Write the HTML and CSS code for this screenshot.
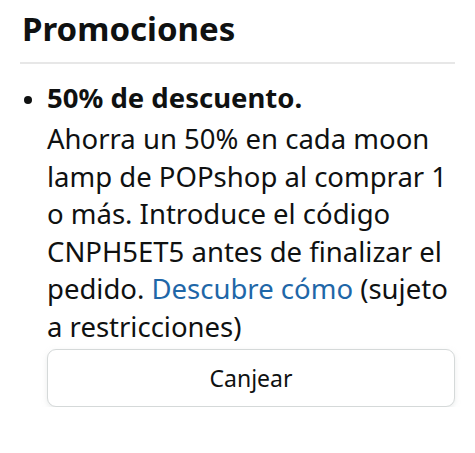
FILE: index.html
```html
<!DOCTYPE html>
<html lang="es">
<head>
    <meta charset="UTF-8">
    <meta name="viewport" content="width=device-width, initial-scale=1.0">
    <title>Promociones</title>
    <link rel="stylesheet" href="styles.css">
</head>
<body>
    <div class="promos">
        <h2 class="promos-title">Promociones</h2>

        <ul class="promo-list">
            <li class="promo">
                <span class="promo-head">50% de descuento.</span>
                Ahorra un 50% en cada moon lamp de POPshop al comprar 1 o más. Introduce el código CNPH5ET5 antes de finalizar el pedido. <a href="#" class="promo-link">Descubre cómo</a> (sujeto a restricciones)
                <button class="redeem">Canjear</button>
            </li>
        </ul>
    </div>
</body>
</html>
```

FILE: styles.css
```css
body {
    margin: 0;
    background: #fff;
    color: #0f1111;
    font-family: 'Noto Sans', 'Open Sans', sans-serif;
}
.promos {
    padding: 0 20px;
}
.promos-title {
    margin: 0;
    padding: 8px 2px 12px;
    font-size: 33px;
    font-weight: 700;
    line-height: 42px;
    border-bottom: 2px solid #e7e7e7;
}
.promo-list {
    margin: 0;
    padding: 0 0 0 27px;
    list-style: disc;
}
.promo {
    font-size: 27.5px;
    line-height: 37.5px;
    padding-top: 11px;
}
.promo::marker {
    font-size: 22px;
}
.promo-head {
    display: block;
    font-weight: 700;
    line-height: 45px;
}
.promo-link {
    color: #1f67a8;
    text-decoration: none;
}
.redeem {
    display: block;
    width: 100%;
    height: 58px;
    margin-top: 4px;
    background: #fff;
    color: #0f1111;
    border: 1px solid #d5d9d9;
    border-radius: 9px;
    box-shadow: 0 2px 5px rgba(213, 217, 217, 0.5);
    font-family: inherit;
    font-size: 23px;
}
```
